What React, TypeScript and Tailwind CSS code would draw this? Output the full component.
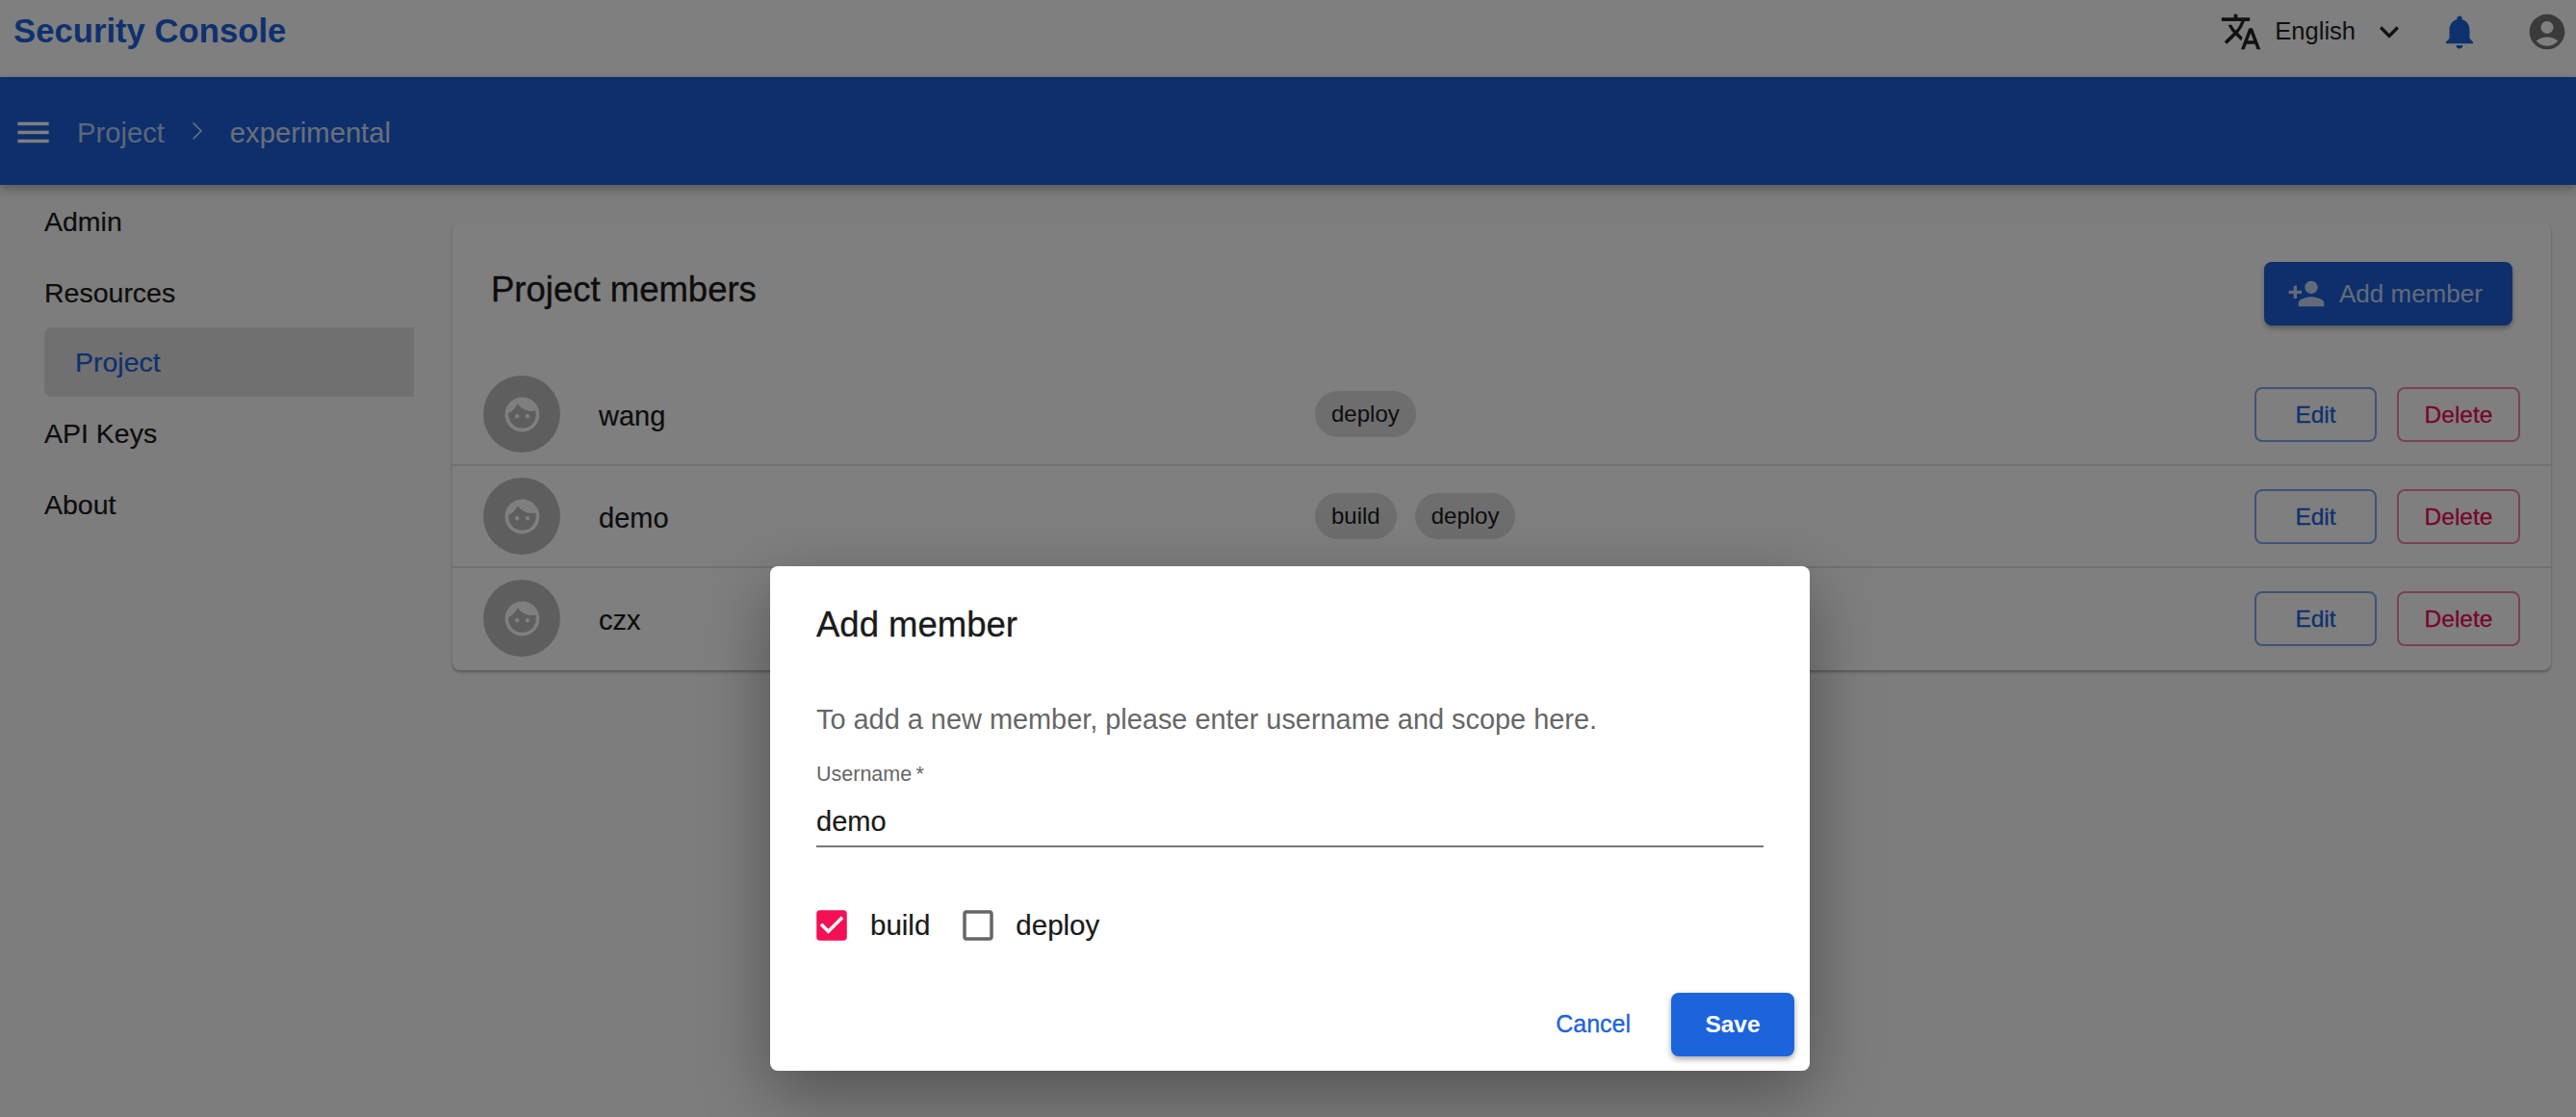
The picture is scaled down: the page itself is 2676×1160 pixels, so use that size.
import React from 'react';
import {
  MdTranslate,
  MdKeyboardArrowDown,
  MdNotifications,
  MdAccountCircle,
  MdMenu,
  MdPersonAdd,
  MdFace,
  MdCheckBox,
  MdCheckBoxOutlineBlank,
} from 'react-icons/md';
import { ChevronRight } from 'lucide-react';

const members = [
  { name: 'wang', scopes: ['deploy'] },
  { name: 'demo', scopes: ['build', 'deploy'] },
  { name: 'czx', scopes: ['deploy'] },
];

function MemberRow({ name, scopes, last }: { name: string; scopes: string[]; last: boolean }) {
  return (
    <div className={`flex h-[106px] items-center border-b-2 pl-[32px] pr-[32px] ${last ? 'border-transparent' : 'border-[#e2e2e2]'}`}>
      <div className="flex h-[80px] w-[80px] shrink-0 items-center justify-center rounded-full bg-[#bdbdbd]">
        <MdFace size={43} className="text-white" />
      </div>
      <div className="ml-[40px] mt-[4px] w-[744px] text-[29px] leading-none text-[#1a1a1a] [-webkit-text-stroke:0.2px]">{name}</div>
      <div className="flex flex-1 gap-[19px]">
        {scopes.map((s) => (
          <span key={s} className="flex h-[48px] items-center rounded-full bg-[#dcdcdc] px-[17px] text-[24px] text-[#1a1a1a]">
            {s}
          </span>
        ))}
      </div>
      <button className="h-[57px] w-[127px] rounded-lg border-2 border-[#7fa6ec] pt-[2px] text-[24.5px] text-[#1c62dc] [-webkit-text-stroke:0.3px]">
        Edit
      </button>
      <button className="ml-[21px] h-[57px] w-[128px] rounded-lg border-2 border-[#f784a8] pt-[2px] text-[24.5px] text-[#ee0a50] [-webkit-text-stroke:0.3px]">
        Delete
      </button>
    </div>
  );
}

export default function App() {
  return (
    <div className="relative h-[1160px] w-full overflow-hidden bg-[#fafafa] font-['Liberation_Sans',sans-serif]">
      {/* top header */}
      <header className="flex h-[80px] items-center justify-between bg-white pb-[15px] pl-[14px] pr-[8px]">
        <h1 className="text-[34.7px] font-bold text-[#1c62dc]">Security Console</h1>
        <div className="flex items-center">
          <MdTranslate size={44} className="text-[#222]" />
          <span className="ml-[13px] text-[25.5px] text-[#222]">English</span>
          <MdKeyboardArrowDown size={40} className="ml-[15px] text-[#222]" />
          <MdNotifications size={42} className="ml-[32px] text-[#1c62dc]" />
          <MdAccountCircle size={44} className="ml-[48px] text-[#757575]" />
        </div>
      </header>

      {/* blue breadcrumb bar */}
      <div className="relative flex h-[112px] items-center bg-[#1c5fd8] pl-[13px] text-white shadow-[0_4px_10px_rgba(0,0,0,0.3)]">
        <MdMenu size={43} className="mt-[3px]" />
        <span className="ml-[24px] mt-[5px] text-[29.2px] text-white/70">Project</span>
        <ChevronRight size={32} strokeWidth={1.2} className="ml-[18px] mt-[-1px] text-white/85" />
        <span className="ml-[18px] mt-[5px] text-[29.2px] text-white/80">experimental</span>
      </div>

      <div className="flex">
        {/* sidebar */}
        <nav className="w-[470px] shrink-0 pl-[46px] pr-[40px] pt-[1px] text-[28.5px] text-[#1a1a1a] [-webkit-text-stroke:0.2px]">
          <div className="flex h-[74px] items-center">Admin</div>
          <div className="flex h-[74px] items-center">Resources</div>
          <div className="mt-[-1px] flex h-[72px] items-center rounded-l-lg bg-[#e0e0e0] pl-[32px] text-[#1c62dc]">Project</div>
          <div className="mt-[1px] flex h-[75px] items-center">API Keys</div>
          <div className="flex h-[73px] items-center">About</div>
        </nav>

        {/* members card */}
        <main className="mt-[40px] w-[2180px]">
          <div className="rounded-lg bg-white shadow-[0_2px_3px_rgba(0,0,0,0.3)]">
            <div className="flex h-[146px] items-start justify-between pl-[40px] pr-[40px] pt-[40px]">
              <h2 className="mt-[5px] text-[36.5px] leading-[48px] text-[#1a1a1a] [-webkit-text-stroke:0.4px]">Project members</h2>
              <button className="flex h-[66px] w-[258px] items-center rounded-lg bg-[#1c5fd8] pl-[24px] text-[26px] text-white/75 shadow-[0_3px_5px_rgba(0,0,0,0.3)]">
                <MdPersonAdd size={40} />
                <span className="ml-[14px]">Add member</span>
              </button>
            </div>
            {members.map((m, i) => (
              <MemberRow key={m.name} name={m.name} scopes={m.scopes} last={i === members.length - 1} />
            ))}
          </div>
        </main>
      </div>

      {/* dialog */}
      <div className="absolute inset-0 bg-black/50 pl-[800px] pt-[588px]">
        <div className="h-[524px] w-[1080px] rounded-lg bg-white px-[48px] pt-[37px] shadow-[0_22px_70px_rgba(0,0,0,0.35)]">
          <h3 className="text-[36.5px] leading-[48px] text-[#1a1a1a] [-webkit-text-stroke:0.3px]">Add member</h3>
          <p className="mt-[54px] text-[28.9px] leading-[40px] text-[#666]">
            To add a new member, please enter username and scope here.
          </p>
          <div className="mt-[23px] w-[984px] border-b-2 border-[#777]">
            <div className="text-[21.5px] leading-[28px] text-[#666]">Username{'\u2009'}*</div>
            <div className="mt-[15px] pb-[5px] text-[29px] leading-[40px] text-[#1a1a1a] [-webkit-text-stroke:0.2px]">demo</div>
          </div>
          <div className="mt-[59px] flex h-[44px] items-center text-[29.5px] text-[#1a1a1a] [-webkit-text-stroke:0.2px]">
            <MdCheckBox size={42} className="ml-[-5px] text-[#f50f55]" />
            <span className="ml-[19px]">build</span>
            <MdCheckBoxOutlineBlank size={42} className="ml-[29px] text-[#666]" />
            <span className="ml-[18px]">deploy</span>
          </div>
          <div className="mr-[-32px] mt-[48px] flex items-center justify-end">
            <button className="text-[25px] text-[#1c62dc] [-webkit-text-stroke:0.3px]">Cancel</button>
            <button className="ml-[42px] h-[66px] w-[128px] rounded-lg bg-[#1c64dc] text-[24.5px] font-bold text-white shadow-[0_3px_6px_rgba(0,0,0,0.35)]">
              Save
            </button>
          </div>
        </div>
      </div>
    </div>
  );
}
